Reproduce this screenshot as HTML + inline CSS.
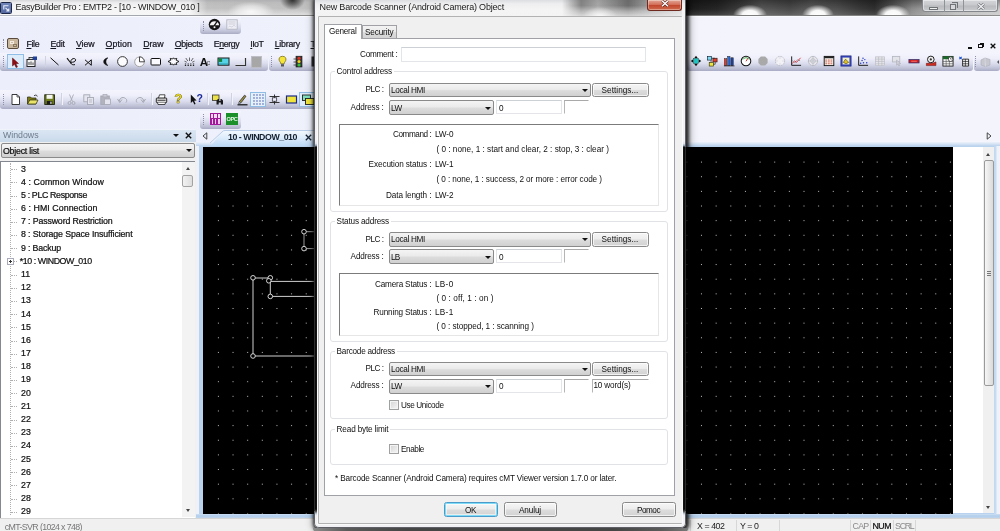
<!DOCTYPE html>
<html><head><meta charset="utf-8"><title>EasyBuilder Pro : EMTP2 - [10 - WINDOW_010 ]</title>
<style>
html,body{margin:0;padding:0;}
body{width:1000px;height:531px;overflow:hidden;background:#f3f4fc;font-family:"Liberation Sans",sans-serif;}
#root{position:relative;width:1000px;height:531px;overflow:hidden;will-change:transform;background:linear-gradient(90deg,#eceefb 0,#eff1fb 35%,#f4f5fc 75%,#f4f5fc 100%);}
.t{position:absolute;white-space:pre;line-height:12px;height:12px;}
.t u{text-decoration:underline;text-underline-offset:1px;}
svg{position:absolute;overflow:visible;}
.combo{position:absolute;box-sizing:border-box;border:1px solid #8a8a8a;border-radius:2px;background:linear-gradient(#f4f4f4,#ebebeb 45%,#dcdcdc 55%,#d0d0d0);}
.combo:after{content:"";position:absolute;right:1.800px;top:50%;margin-top:-1.200px;border:3.300px solid transparent;border-top:3.800px solid #111;border-bottom:0;}
.btn{position:absolute;box-sizing:border-box;border:1px solid #8a8a8a;border-radius:2.5px;background:linear-gradient(#f6f6f6,#ececec 48%,#dddddd 52%,#d2d2d2);box-shadow:inset 0 0 0 1px rgba(255,255,255,.7);}
.edit{position:absolute;box-sizing:border-box;border:1px solid #e3e5e8;border-top-color:#cdd0d5;background:#fff;}
.grp{position:absolute;box-sizing:border-box;border:1px solid #e0e2e5;border-radius:3px;}
.sunk{position:absolute;box-sizing:border-box;border:1px solid;border-color:#7b7b7b #e6e6e6 #e6e6e6 #7b7b7b;background:#fff;}
.chk{position:absolute;box-sizing:border-box;border:1px solid #9fa0a0;background:linear-gradient(135deg,#d4d4d4,#f6f6f6);box-shadow:inset 0 0 0 1px #f4f4f4;}
.tb{position:absolute;box-sizing:border-box;border-radius:0 0 3px 3px;background:linear-gradient(#f3f4fc 0,#eeeffa 30%,#dadced 60%,#bec0d6 85%,#a9abc4 100%);}
.grip{position:absolute;width:1px;border-left:1px dotted #8d90a8;}

</style></head>
<body>
<div id="root">
<div style="position:absolute;left:0.00px;top:0.00px;width:1000.00px;height:15.00px;background:linear-gradient(#d6d7da 0,#ededef 18%,#f5f5f6 45%,#f6f6f7 100%);"></div>
<div style="position:absolute;left:190.00px;top:0.00px;width:124.00px;height:15.00px;background:linear-gradient(90deg,rgba(120,120,120,0) 0,rgba(120,120,120,.42) 14%,rgba(130,130,130,.46) 100%);-webkit-mask-image:linear-gradient(#000 0,#000 55%,rgba(0,0,0,.45) 100%);"></div>
<div style="position:absolute;left:228.00px;top:2.00px;width:46.00px;height:13.00px;background:radial-gradient(ellipse at 50% 75%,rgba(255,255,255,.85) 0,rgba(255,255,255,.5) 40%,rgba(255,255,255,0) 72%);"></div>
<div style="position:absolute;left:280.00px;top:0.00px;width:25.00px;height:9.50px;background:radial-gradient(ellipse 50% 100% at 50% 0,rgba(25,25,25,.85) 0,rgba(40,40,40,.55) 45%,rgba(90,90,90,0) 100%);"></div>
<div style="position:absolute;left:686.00px;top:0.00px;width:314.00px;height:15.00px;background:linear-gradient(90deg,#1c1c1c 0,#262626 10%,#3c3c3c 17%,#585858 24%,#4a4a4a 33%,#5c5c5c 40%,#505050 48%,#383838 56%,#303030 60%,#5a5a5a 66%,#8c8c8c 72%,#a4a4a4 78%,#bdbdbd 86%,#cacaca 100%);"></div>
<div style="position:absolute;left:686.00px;top:0.00px;width:314.00px;height:15.00px;background:linear-gradient(rgba(0,0,0,.35),rgba(0,0,0,0) 60%,rgba(255,255,255,.12));"></div>
<div style="position:absolute;left:733.00px;top:2.50px;width:34.00px;height:12.50px;background:radial-gradient(ellipse 50% 85% at 50% 100%,#fff 0,rgba(255,255,255,.95) 45%,rgba(255,255,255,.5) 70%,rgba(255,255,255,0) 100%);"></div>
<div style="position:absolute;left:802.00px;top:2.50px;width:32.00px;height:12.50px;background:radial-gradient(ellipse 50% 85% at 50% 100%,#fff 0,rgba(255,255,255,.95) 45%,rgba(255,255,255,.5) 70%,rgba(255,255,255,0) 100%);"></div>
<div style="position:absolute;left:876.00px;top:2.50px;width:34.00px;height:12.50px;background:radial-gradient(ellipse 50% 85% at 50% 100%,#fff 0,rgba(255,255,255,.95) 45%,rgba(255,255,255,.5) 70%,rgba(255,255,255,0) 100%);"></div>
<div style="position:absolute;left:0.00px;top:14.50px;width:1000.00px;height:1.00px;background:linear-gradient(90deg,#b9bcc4 0,#9a9ca2 20%,#8a8a8a 30%,#777 70%,#8e8e8e 100%)"></div>
<div style="position:absolute;left:0.00px;top:15.50px;width:1000.00px;height:1.00px;background:#fafbfe"></div>
<div style="position:absolute;left:0.30px;top:2.20px;width:11.70px;height:11.40px;background:linear-gradient(#6f84b8,#54699f);border:1.200px solid #1c2748;box-sizing:border-box;border-radius:1.500px;"><svg style="left:1.500px;top:1.500px" width="7" height="7" viewBox="0 0 7 7"><path d="M.8 4.500V.8H5.500M2.500 2.800 L5.800 6 M5.800 3.500V6H3.300" fill="none" stroke="#e8eefa" stroke-width="1.100"/></svg></div>
<span class="t" style="left:15.40px;top:1.00px;font-size:9px;font-weight:400;color:#1a1a1a;letter-spacing:-0.251px;">EasyBuilder Pro : EMTP2 - [10 - WINDOW_010 ]</span>
<div style="position:absolute;left:922.40px;top:0.00px;width:75.20px;height:12.20px;border:1px solid #84878c;border-top:0;border-radius:0 0 3.500px 3.500px;box-sizing:border-box;background:linear-gradient(#d3d5d8,#c6c8cb 48%,#b8babd 52%,#c9cbce);box-shadow:inset 0 0 0 1px rgba(255,255,255,.45)"></div>
<div style="position:absolute;left:943.50px;top:0.00px;width:1.00px;height:11.50px;background:#8f9297;"></div>
<div style="position:absolute;left:963.00px;top:0.00px;width:1.00px;height:11.50px;background:#8f9297;"></div>
<div style="position:absolute;left:929.00px;top:6.50px;width:8.50px;height:3.00px;border:1px solid #6f7277;background:#eee;box-sizing:border-box;border-radius:.5px"></div>
<div style="position:absolute;left:949.50px;top:3.50px;width:6.00px;height:6.00px;border:1px solid #6f7277;box-sizing:border-box;background:rgba(240,240,240,.5)"></div>
<div style="position:absolute;left:951.50px;top:1.80px;width:6.00px;height:6.00px;border:1px solid #6f7277;box-sizing:border-box;border-left:0;border-bottom:0"></div>
<svg style="left:976.500px;top:2.500px" width="8" height="7" viewBox="0 0 8 7"><path d="M1 .8 L7 6.200M7 .8 L1 6.200" stroke="#70737a" stroke-width="2.600"/><path d="M1 .8 L7 6.200M7 .8 L1 6.200" stroke="#f2f2f2" stroke-width="1.300"/></svg>
<div class="tb" style="position:absolute;left:200.10px;top:17.00px;width:41.40px;height:17.40px;"></div>
<div class="grip" style="position:absolute;left:203.00px;top:20.50px;width:1.00px;height:10.00px;"></div>
<svg style="left:208.300px;top:18.300px" width="13" height="13" viewBox="0 0 13 13"><circle cx="6.5" cy="6.5" r="5.800" fill="#161616"/><path d="M1.800 7.200 A4.800 4.800 0 0 1 11.200 7.200 Z" fill="#f4f4f4"/><path d="M6 7.800 L9.200 3.400" stroke="#111" stroke-width="1.300"/><circle cx="6.500" cy="9.300" r="1" fill="#eee"/></svg>
<svg style="left:226.300px;top:19.300px" width="12" height="11" viewBox="0 0 12 11"><rect x=".8" y=".8" width="10.400" height="9.400" fill="#eeeff6" stroke="#b4b6c2" stroke-width=".9"/><path d="M2.500 3h7M2.500 5h7" stroke="#c0c2cd" stroke-width=".7"/><path d="M2.500 8 C4 6 5 9 6.500 7.500 S8.500 6.500 9.500 7.500" fill="none" stroke="#c0c2cd" stroke-width=".7"/></svg>
<div class="grip" style="position:absolute;left:2.50px;top:39.00px;width:1.00px;height:10.00px;"></div>
<div style="position:absolute;left:7.20px;top:38.20px;width:12.00px;height:11.20px;box-sizing:border-box;border:1px solid #5b4b3c;border-radius:2px;background:#c9b89f;"><div style="position:absolute;left:2px;top:2px;width:4px;height:3px;border:1px solid #f4ece0;box-sizing:border-box"></div><div style="position:absolute;left:4.5px;top:4.5px;width:4px;height:3px;border:1px solid #8a7760;box-sizing:border-box"></div></div>
<span class="t" style="left:26.40px;top:37.60px;font-size:8.8px;font-weight:400;color:#15151f;letter-spacing:-0.347px;-webkit-text-stroke:.22px #15151f;"><u>F</u>ile</span>
<span class="t" style="left:50.40px;top:37.60px;font-size:8.8px;font-weight:400;color:#15151f;letter-spacing:-0.193px;-webkit-text-stroke:.22px #15151f;"><u>E</u>dit</span>
<span class="t" style="left:76.00px;top:37.60px;font-size:8.8px;font-weight:400;color:#15151f;letter-spacing:-0.130px;-webkit-text-stroke:.22px #15151f;"><u>V</u>iew</span>
<span class="t" style="left:105.60px;top:37.60px;font-size:8.8px;font-weight:400;color:#15151f;letter-spacing:0.080px;-webkit-text-stroke:.22px #15151f;"><u>O</u>ption</span>
<span class="t" style="left:143.20px;top:37.60px;font-size:8.8px;font-weight:400;color:#15151f;letter-spacing:-0.058px;-webkit-text-stroke:.22px #15151f;"><u>D</u>raw</span>
<span class="t" style="left:174.70px;top:37.60px;font-size:8.8px;font-weight:400;color:#15151f;letter-spacing:-0.290px;-webkit-text-stroke:.22px #15151f;"><u>O</u>bjects</span>
<span class="t" style="left:213.80px;top:37.60px;font-size:8.8px;font-weight:400;color:#15151f;letter-spacing:-0.396px;-webkit-text-stroke:.22px #15151f;">E<u>n</u>ergy</span>
<span class="t" style="left:250.30px;top:37.60px;font-size:8.8px;font-weight:400;color:#15151f;letter-spacing:-0.539px;-webkit-text-stroke:.22px #15151f;"><u>I</u>IoT</span>
<span class="t" style="left:274.70px;top:37.60px;font-size:8.8px;font-weight:400;color:#15151f;letter-spacing:-0.242px;-webkit-text-stroke:.22px #15151f;"><u>L</u>ibrary</span>
<span class="t" style="left:310.50px;top:37.60px;font-size:8.8px;font-weight:400;color:#15151f;"><u>T</u></span>
<div class="tb" style="position:absolute;left:0.00px;top:52.60px;width:267.50px;height:18.90px;"></div>
<div class="tb" style="position:absolute;left:268.50px;top:52.60px;width:52.00px;height:18.90px;"></div>
<div class="grip" style="position:absolute;left:2.50px;top:56.00px;width:1.00px;height:11.00px;"></div>
<div class="grip" style="position:absolute;left:270.50px;top:56.00px;width:1.00px;height:11.00px;"></div>
<div style="position:absolute;left:7.20px;top:54.20px;width:16.80px;height:15.20px;box-sizing:border-box;border:1px solid #8fbde6;background:#dcecfb;"></div>
<svg style="left:8.8px;top:56.2px" width="13" height="13" viewBox="0 0 13 13"><path d="M3.5 2 L3.5 10 L5.500 8.300 L7.100 11.600 L8.500 10.900 L6.900 7.700 L9.500 7.500 Z" fill="#8e0c12" stroke="#5d0a0e" stroke-width=".5"/></svg>
<svg style="left:24.5px;top:55.3px" width="13" height="13" viewBox="0 0 13 13"><rect x="2" y="4.5" width="8" height="7" fill="#f4f4f4" stroke="#222" stroke-width="1"/><rect x="4" y="2.5" width="4" height="2" fill="#ddd" stroke="#222" stroke-width=".8"/><rect x="8" y="1.5" width="4" height="3.5" fill="#1d3f9e"/><path d="M4 7v3M6 6.5v3.5M8 7.5v2.500" stroke="#333" stroke-width=".9"/></svg>
<div style="position:absolute;left:44.50px;top:56.00px;width:1.00px;height:11.00px;background:#d0d2e1;"></div>
<svg style="left:48.0px;top:55.3px" width="13" height="13" viewBox="0 0 13 13"><path d="M2.5 2.800 L10.500 10" stroke="#111" stroke-width="1"/></svg>
<svg style="left:65.0px;top:55.3px" width="13" height="13" viewBox="0 0 13 13"><path d="M2 3.200 L6.200 8.500" fill="none" stroke="#111" stroke-width="1.100"/><path d="M6 7.200 C8 7.500 10.800 6.800 10.600 4.800 C10.400 3 7 3 6 5.500 C5 8 6.500 10.500 10 9.600" fill="none" stroke="#111" stroke-width="1"/></svg>
<svg style="left:82.3px;top:55.6px" width="13" height="13" viewBox="0 0 13 13"><path d="M3 3.800 L9.300 9.300 L9.300 3.800 L3 9.300" fill="none" stroke="#111" stroke-width="1"/></svg>
<svg style="left:99.1px;top:55.3px" width="13" height="13" viewBox="0 0 13 13"><path d="M9 2.800 C3.200 3.600 3.200 9.800 9 10.600 C6.300 8.800 6.300 4.600 9 2.800Z" fill="#111" stroke="#111" stroke-width=".5"/></svg>
<svg style="left:115.9px;top:55.1px" width="13" height="13" viewBox="0 0 13 13"><circle cx="6.5" cy="6.5" r="4.900" fill="#fcfcff" stroke="#222" stroke-width=".9"/></svg>
<svg style="left:132.5px;top:55.3px" width="13" height="13" viewBox="0 0 13 13"><circle cx="6.5" cy="6.8" r="4.800" fill="#fbfbff" stroke="#9a9a9a" stroke-width=".9"/><path d="M6.5 6.8 L6.5 1.8 A5 5 0 0 1 11.400 6.800Z" fill="#fff" stroke="#333" stroke-width=".9"/></svg>
<svg style="left:149.3px;top:55.3px" width="13" height="13" viewBox="0 0 13 13"><rect x="2" y="3.500" width="9.500" height="6.500" rx=".8" fill="#fbfbff" stroke="#111" stroke-width="1"/></svg>
<svg style="left:166.7px;top:55.3px" width="13" height="13" viewBox="0 0 13 13"><path d="M1 6.500 L3.800 5.200 L3.200 3.400 L5.600 4 L6.500 2.800 L7.400 4 L9.800 3.400 L9.200 5.200 L12 6.500 L9.200 7.800 L9.800 9.600 L7.400 9 L6.500 10.200 L5.600 9 L3.200 9.600 L3.800 7.800Z" fill="#fbfbff" stroke="#111" stroke-width=".9"/></svg>
<svg style="left:182.5px;top:55.3px" width="13" height="13" viewBox="0 0 13 13"><path d="M2.5 8.500v3M5.200 8.500v3M7.800 8.500v3M10.500 8.500v3" stroke="#222" stroke-width="1.300" stroke-dasharray="1 .6"/><path d="M6.500 6 L6.500 2.500M4.800 6 L2.800 3M8.200 6 L10.200 3M3.800 7.200 L1.500 6.200M9.200 7.200 L11.500 6.200" stroke="#444" stroke-width=".8"/></svg>
<span class="t" style="left:199.80px;top:55.68px;font-size:11.5px;font-weight:700;color:#111;">A</span>
<span class="t" style="left:206.60px;top:56.86px;font-size:7.5px;font-weight:400;color:#555;">c</span>
<svg style="left:216.7px;top:55.3px" width="13" height="13" viewBox="0 0 13 13"><rect x="1" y="3" width="11" height="7.200" fill="#56d3e4" stroke="#1a1a1a" stroke-width="1"/><rect x="1.500" y="3.500" width="3.600" height="3.400" fill="#15803a"/><path d="M2 8.800h9" stroke="#2aa0b4" stroke-width=".8"/></svg>
<svg style="left:233.5px;top:55.3px" width="13" height="13" viewBox="0 0 13 13"><path d="M1.500 10.500 L11.500 10.500 L11.500 3" fill="none" stroke="#333" stroke-width="1.200"/><path d="M2 9.500 L10.500 9.500 L10.500 3.500" fill="none" stroke="#dcdce6" stroke-width="1"/></svg>
<div style="position:absolute;left:250.60px;top:56.00px;width:11.00px;height:11.50px;background:#a7a7a7;border:1px solid #bdbdc6;box-sizing:border-box"></div>
<svg style="left:275.5px;top:55.3px" width="13" height="13" viewBox="0 0 13 13"><path d="M6.500 1.300 C3.600 1.300 2.600 3.500 3.200 5.300 C3.700 6.700 4.800 7.300 4.800 8.800 L8.200 8.800 C8.200 7.300 9.300 6.700 9.800 5.300 C10.400 3.500 9.400 1.300 6.500 1.300Z" fill="#f4e43a" stroke="#6a5f10" stroke-width=".7"/><rect x="5" y="9.200" width="3" height="2.300" fill="#555"/></svg>
<svg style="left:292.1px;top:55.3px" width="13" height="13" viewBox="0 0 13 13"><rect x="4" y="1.200" width="6" height="10.800" fill="#3b3b3b" stroke="#111" stroke-width=".6"/><circle cx="7" cy="3.300" r="1.500" fill="#e5301e"/><circle cx="7" cy="6.600" r="1.500" fill="#f0d41c"/><circle cx="7" cy="9.900" r="1.500" fill="#2fc437"/><path d="M1.500 4h2.500M1.500 7h2.500M1.500 10h2.500" stroke="#333" stroke-width=".8"/></svg>
<svg style="left:307.5px;top:55.3px" width="13" height="13" viewBox="0 0 13 13"><rect x="3.500" y="1.500" width="3" height="10" fill="#333"/></svg>
<div class="tb" style="position:absolute;left:0.00px;top:90.00px;width:321.00px;height:19.40px;"></div>
<div class="grip" style="position:absolute;left:2.50px;top:94.00px;width:1.00px;height:11.00px;"></div>
<svg style="left:8.5px;top:92.8px" width="13" height="13" viewBox="0 0 13 13"><path d="M3 1.500 L8 1.500 L10.500 4 L10.500 11.500 L3 11.500Z" fill="#fff" stroke="#222" stroke-width=".9"/><path d="M8 1.500V4H10.500" fill="none" stroke="#222" stroke-width=".7"/></svg>
<svg style="left:25.5px;top:92.8px" width="13" height="13" viewBox="0 0 13 13"><path d="M1.500 11 L1.500 4 L4.500 4 L5.500 5 L10 5 L10 11Z" fill="#7c7a18" stroke="#2a2a08" stroke-width=".7"/><path d="M1.500 11 L3.800 7 L12 7 L10 11Z" fill="#e9e36a" stroke="#2a2a08" stroke-width=".7"/><path d="M8 2.800 C9.500 1.500 11 2 11.300 3.500" fill="none" stroke="#222" stroke-width=".8"/></svg>
<svg style="left:43.0px;top:92.8px" width="13" height="13" viewBox="0 0 13 13"><rect x="1.800" y="1.800" width="9.600" height="9.600" fill="#6f7d1a" stroke="#161a05" stroke-width=".9"/><rect x="3.600" y="1.800" width="6" height="4" fill="#f4f4f4"/><rect x="3.800" y="8" width="5.500" height="3.400" fill="#1b1b1b"/><rect x="7.300" y="8.600" width="1.300" height="2.300" fill="#ddd"/></svg>
<div style="position:absolute;left:60.50px;top:93.00px;width:1.00px;height:12.00px;background:#cfd1e0;border-right:1px solid #f3f4fb"></div>
<svg style="left:64.5px;top:92.8px" width="13" height="13" viewBox="0 0 13 13"><path d="M4.500 1.500 L7.500 8.500M8.500 1.500 L5.500 8.500" stroke="#a6a8b4" stroke-width=".9"/><circle cx="4.500" cy="10" r="1.500" fill="none" stroke="#a6a8b4" stroke-width=".9"/><circle cx="8.500" cy="10" r="1.500" fill="none" stroke="#a6a8b4" stroke-width=".9"/></svg>
<svg style="left:81.9px;top:92.8px" width="13" height="13" viewBox="0 0 13 13"><rect x="1.800" y="1.800" width="6" height="7" fill="#e4e5ee" stroke="#a6a8b4" stroke-width=".9"/><rect x="5.500" y="4.500" width="6" height="7" fill="#e4e5ee" stroke="#a6a8b4" stroke-width=".9"/><path d="M7 7h3M7 9h3" stroke="#a6a8b4" stroke-width=".7"/></svg>
<svg style="left:99.1px;top:92.8px" width="13" height="13" viewBox="0 0 13 13"><rect x="1.800" y="3" width="8.500" height="8.500" fill="#b2b3be" stroke="#a6a8b4" stroke-width=".9"/><rect x="4" y="1.500" width="4" height="2.500" fill="#c9cad3" stroke="#a6a8b4" stroke-width=".7"/><rect x="5.500" y="6" width="6" height="5.500" fill="#e4e5ee" stroke="#a6a8b4" stroke-width=".8"/></svg>
<svg style="left:116.3px;top:92.8px" width="13" height="13" viewBox="0 0 13 13"><path d="M3.500 8.500 C3 4.500 8 3 10.500 6.500 C11 8 10.500 9 10 9.500" fill="none" stroke="#a6a8b4" stroke-width="1"/><path d="M1.500 6 L3.700 9.500 L6 6.500" fill="none" stroke="#a6a8b4" stroke-width="1"/><path d="M2 11.500h9" stroke="#c6c8d4" stroke-width=".8"/></svg>
<svg style="left:133.5px;top:92.8px" width="13" height="13" viewBox="0 0 13 13"><path d="M9.500 8.500 C10 4.500 5 3 2.500 6.500 C2 8 2.500 9 3 9.500" fill="none" stroke="#a6a8b4" stroke-width="1"/><path d="M11.500 6 L9.300 9.500 L7 6.500" fill="none" stroke="#a6a8b4" stroke-width="1"/><path d="M2 11.500h9" stroke="#c6c8d4" stroke-width=".8"/></svg>
<div style="position:absolute;left:150.50px;top:93.00px;width:1.00px;height:12.00px;background:#cfd1e0;border-right:1px solid #f3f4fb"></div>
<svg style="left:155.2px;top:92.8px" width="13" height="13" viewBox="0 0 13 13"><path d="M3.500 5 L4.500 1.800 L10 1.800 L9.500 5" fill="#fff" stroke="#222" stroke-width=".8"/><rect x="1.300" y="5" width="10.400" height="4.600" rx=".8" fill="#d7d7d7" stroke="#111" stroke-width=".9"/><path d="M2.500 9.600 L3 11.500 L10 11.500 L10.500 9.600" fill="#fafafa" stroke="#222" stroke-width=".8"/><path d="M2.500 7.300h8" stroke="#333" stroke-width=".9"/></svg>
<span class="t" style="left:174.40px;top:92.74px;font-size:12.5px;font-weight:700;color:#e2d21e;-webkit-text-stroke:.7px #4a4208;paint-order:stroke fill;">?</span>
<svg style="left:188.9px;top:92.8px" width="13" height="13" viewBox="0 0 13 13"><path d="M1.800 1.500 L1.800 10 L3.800 8.300 L5.300 11.600 L6.600 11 L5.100 7.800 L7.600 7.600Z" fill="#111"/></svg>
<span class="t" style="left:196.60px;top:92.13px;font-size:10.5px;font-weight:700;color:#1c2a9c;">?</span>
<div style="position:absolute;left:206.50px;top:93.00px;width:1.00px;height:12.00px;background:#cfd1e0;border-right:1px solid #f3f4fb"></div>
<svg style="left:211.3px;top:92.8px" width="13" height="13" viewBox="0 0 13 13"><rect x="1.500" y="2" width="6.500" height="5.500" fill="#ece247" stroke="#333" stroke-width=".8"/><path d="M5.500 11.500 L5.500 7.500 L7 6 L8 6 L8 8 L9.500 8 L9.500 6 L10.500 6 L12 7.500 L12 11.500 L9.800 11.500 L9.800 9.500 L7.700 9.500 L7.700 11.500Z" fill="#1b1b1b"/></svg>
<div style="position:absolute;left:230.50px;top:93.00px;width:1.00px;height:12.00px;background:#cfd1e0;border-right:1px solid #f3f4fb"></div>
<svg style="left:236.1px;top:92.8px" width="13" height="13" viewBox="0 0 13 13"><path d="M3 9 L8.500 2.200 L10 3.300 L5 9.800Z" fill="#9a8f3a" stroke="#222" stroke-width=".7"/><path d="M3 9 L2.600 10.600 L5 9.800" fill="#eee" stroke="#222" stroke-width=".6"/><path d="M1.500 11.800h10" stroke="#111" stroke-width="1.200"/></svg>
<div style="position:absolute;left:250.20px;top:91.50px;width:16.20px;height:15.60px;box-sizing:border-box;border:1px solid #8fbde6;background:#e6f1fc;"></div>
<svg style="left:251.8px;top:92.8px" width="13" height="13" viewBox="0 0 13 13"><g fill="#27379c"><circle cx="2" cy="2" r=".65"/><circle cx="5" cy="2" r=".65"/><circle cx="8" cy="2" r=".65"/><circle cx="11" cy="2" r=".65"/><circle cx="2" cy="5" r=".65"/><circle cx="5" cy="5" r=".65"/><circle cx="8" cy="5" r=".65"/><circle cx="11" cy="5" r=".65"/><circle cx="2" cy="8" r=".65"/><circle cx="5" cy="8" r=".65"/><circle cx="8" cy="8" r=".65"/><circle cx="11" cy="8" r=".65"/><circle cx="2" cy="11" r=".65"/><circle cx="5" cy="11" r=".65"/><circle cx="8" cy="11" r=".65"/><circle cx="11" cy="11" r=".65"/></g></svg>
<svg style="left:268.1px;top:92.8px" width="13" height="13" viewBox="0 0 13 13"><path d="M1.500 3.500h10M1.500 9.500h10M6.500 1.500v10" stroke="#222" stroke-width=".9"/><rect x="4.300" y="4.800" width="4.400" height="3.400" fill="#eef" stroke="#222" stroke-width=".7"/></svg>
<svg style="left:284.5px;top:92.8px" width="13" height="13" viewBox="0 0 13 13"><rect x="1.500" y="3" width="10" height="7" fill="#f1e53c" stroke="#1b2a8c" stroke-width="1.200"/></svg>
<div style="position:absolute;left:299.20px;top:91.50px;width:15.00px;height:15.60px;box-sizing:border-box;border:1px solid #8fbde6;border-right:0;background:#dcecfb;"></div>
<svg style="left:301.0px;top:92.8px" width="13" height="13" viewBox="0 0 13 13"><rect x="1.500" y="2" width="8" height="5.500" fill="#7fe0c0" stroke="#222" stroke-width=".9"/><rect x="4.500" y="5.500" width="8.500" height="6" fill="#f1e53c" stroke="#222" stroke-width=".9"/></svg>
<div class="tb" style="position:absolute;left:200.30px;top:111.00px;width:41.00px;height:17.50px;"></div>
<div class="grip" style="position:absolute;left:202.50px;top:113.50px;width:1.00px;height:11.00px;"></div>
<div style="position:absolute;left:209.60px;top:113.00px;width:11.80px;height:11.60px;background:#a3199c;"><div style="position:absolute;left:1.500px;top:1px;width:8.800px;height:4px;background:#f4d9f2"></div><div style="position:absolute;left:3.400px;top:1px;width:1.200px;height:10px;background:#a3199c"></div><div style="position:absolute;left:7.200px;top:1px;width:1.200px;height:10px;background:#a3199c"></div><div style="position:absolute;left:2px;top:6px;width:1.300px;height:5px;background:#f1c9ef"></div><div style="position:absolute;left:5.300px;top:6px;width:1.300px;height:5px;background:#f1c9ef"></div><div style="position:absolute;left:8.800px;top:6px;width:1.300px;height:5px;background:#f1c9ef"></div></div>
<div style="position:absolute;left:226.00px;top:113.00px;width:12.00px;height:11.60px;background:#1b8f2a;"></div>
<span class="t" style="left:226.60px;top:112.65px;font-size:5.6px;font-weight:700;color:#e9f7e9;letter-spacing:-0.442px;">OPC</span>
<div class="tb" style="position:absolute;left:687.00px;top:52.60px;width:285.50px;height:18.90px;"></div>
<div class="tb" style="position:absolute;left:973.50px;top:52.60px;width:26.50px;height:18.90px;"></div>
<div class="grip" style="position:absolute;left:974.50px;top:56.00px;width:1.00px;height:11.00px;"></div>
<svg style="left:690.0px;top:55.2px" width="12" height="12" viewBox="0 0 13 13"><path d="M6.500 .8 L8.500 3.500 L4.500 3.500ZM6.500 12.200 L8.500 9.500 L4.500 9.500ZM.8 6.500 L3.500 4.500 L3.500 8.500ZM12.200 6.500 L9.500 4.500 L9.500 8.500Z" fill="#111"/><rect x="4" y="4" width="5" height="5" fill="#23c7c4" stroke="#0a5c5a" stroke-width=".6"/></svg>
<svg style="left:706.0px;top:55.2px" width="12" height="12" viewBox="0 0 13 13"><rect x="1.500" y="1.500" width="4.500" height="4" fill="#7fd8f0" stroke="#123" stroke-width=".7"/><rect x="7.500" y="3.500" width="4.500" height="4" fill="#e33c2c" stroke="#311" stroke-width=".7"/><rect x="3.500" y="8" width="4.500" height="4" fill="#f1e53c" stroke="#331" stroke-width=".7"/><path d="M6 3.500h3.500M5.500 8V5.500M8 10h2V7.500" fill="none" stroke="#222" stroke-width=".7"/></svg>
<svg style="left:722.6px;top:55.2px" width="12" height="12" viewBox="0 0 13 13"><rect x="1.500" y="4" width="2.600" height="7.500" fill="#e33c2c" stroke="#222" stroke-width=".5"/><rect x="5" y="1.500" width="2.600" height="10" fill="#2b6fdc" stroke="#222" stroke-width=".5"/><rect x="8.500" y="3" width="2.600" height="8.500" fill="#1d3f9e" stroke="#222" stroke-width=".5"/><path d="M1 11.800h11.500" stroke="#111" stroke-width=".8"/></svg>
<svg style="left:739.6px;top:55.2px" width="12" height="12" viewBox="0 0 13 13"><circle cx="6.500" cy="6.500" r="5.200" fill="#fff" stroke="#111" stroke-width="1.100"/><path d="M6.500 6.800 L8.800 3.200" stroke="#d22" stroke-width="1"/><path d="M3 5 A4 4 0 0 1 10 5" fill="none" stroke="#2a9a3a" stroke-width=".9"/></svg>
<svg style="left:756.6px;top:55.2px" width="12" height="12" viewBox="0 0 13 13"><path d="M4.200 1.500 L8.800 1.500 L11.500 4.200 L11.500 8.800 L8.800 11.500 L4.200 11.500 L1.500 8.800 L1.500 4.200Z" fill="#a9a9a9"/></svg>
<svg style="left:773.8px;top:55.2px" width="12" height="12" viewBox="0 0 13 13"><circle cx="6.500" cy="6.500" r="5" fill="#f1f1f6" stroke="#b4b5c0" stroke-width="1" stroke-dasharray="1.600 1"/><path d="M6.500 2.500v1.500M6.500 9v1.500M2.500 6.500h1.500M9 6.500h1.500" stroke="#c6c7d0" stroke-width=".7"/></svg>
<svg style="left:790.0px;top:55.2px" width="12" height="12" viewBox="0 0 13 13"><path d="M1.800 1.500V11.200H12" fill="none" stroke="#111" stroke-width="1"/><path d="M2.500 9 L5 6.500 L7 8 L11.500 3" fill="none" stroke="#d22" stroke-width=".9"/><path d="M2.500 6 L5 8.500 L8 5 L11.500 6.500" fill="none" stroke="#555" stroke-width=".7" stroke-dasharray="1 .7"/></svg>
<svg style="left:806.8px;top:55.2px" width="12" height="12" viewBox="0 0 13 13"><circle cx="6.500" cy="6.500" r="5" fill="#e9e9ee" stroke="#b5b6c0" stroke-width=".9"/><circle cx="6.500" cy="6.500" r="2.500" fill="none" stroke="#b5b6c0" stroke-width=".8"/><path d="M6.500 1v11M1 6.500h11" stroke="#b5b6c0" stroke-width=".7"/></svg>
<svg style="left:823.4px;top:55.2px" width="12" height="12" viewBox="0 0 13 13"><rect x="1.300" y="1.500" width="10.400" height="10" fill="#fbf7f2" stroke="#111" stroke-width="1"/><rect x="1.300" y="1.500" width="10.400" height="2" fill="#222"/><path d="M2.500 5.500h8M2.500 7.500h8M2.500 9.500h8" stroke="#c2402c" stroke-width=".9" stroke-dasharray="2 .8"/></svg>
<svg style="left:840.4px;top:55.2px" width="12" height="12" viewBox="0 0 13 13"><rect x="1" y="1" width="11" height="11" fill="#3b49c4" stroke="#1a237e" stroke-width=".8"/><rect x="2.800" y="2.800" width="7.400" height="7.400" fill="#f3f0c4"/><path d="M3.500 8 L6 4.500 L9.500 8 L6.500 9.500Z" fill="#e0c020" stroke="#333" stroke-width=".6"/></svg>
<svg style="left:857.0px;top:55.2px" width="12" height="12" viewBox="0 0 13 13"><path d="M1.800 1.500V11.200H12" fill="none" stroke="#111" stroke-width="1"/><g fill="#2b3fc4"><circle cx="4" cy="9" r=".8"/><circle cx="5.500" cy="6" r=".8"/><circle cx="7" cy="8.500" r=".8"/><circle cx="8.500" cy="5" r=".8"/><circle cx="10.500" cy="8.500" r=".8"/><circle cx="6.500" cy="3.500" r=".8"/></g></svg>
<svg style="left:874.0px;top:55.2px" width="12" height="12" viewBox="0 0 13 13"><rect x="1.500" y="2" width="10" height="9.500" fill="#e6e6ea" stroke="#c0c1c9" stroke-width=".8"/><path d="M1.500 4.500h10M1.500 7h10M1.500 9.500h10M5 2v9.500M8.500 2v9.500" stroke="#b9bac3" stroke-width=".7"/></svg>
<svg style="left:891.0px;top:55.2px" width="12" height="12" viewBox="0 0 13 13"><rect x="1.500" y="1.500" width="8" height="6" fill="#e3e4ea" stroke="#b5b6c0" stroke-width=".9"/><path d="M6 5.500 L6 11 L7.500 9.800 L8.500 12 L9.500 11.500 L8.500 9.400 L10.500 9.200Z" fill="#d0d1d8" stroke="#a9aab4" stroke-width=".6"/></svg>
<svg style="left:908.0px;top:55.2px" width="12" height="12" viewBox="0 0 13 13"><rect x="1" y="5" width="11" height="3.600" fill="#d21d1d" stroke="#2a2a6a" stroke-width=".8"/><path d="M3.500 6.800h6" stroke="#ff9a9a" stroke-width=".7"/></svg>
<svg style="left:925.0px;top:55.2px" width="12" height="12" viewBox="0 0 13 13"><circle cx="6.300" cy="4.800" r="3.600" fill="#f0f0f0" stroke="#111" stroke-width="1"/><circle cx="6.300" cy="4.800" r="1.200" fill="#333"/><path d="M1.500 9 L8 9 L11.800 7.500 L11.800 11.500 L1.500 11.500Z" fill="#d22a1c" stroke="#611" stroke-width=".6"/></svg>
<svg style="left:942.0px;top:55.2px" width="12" height="12" viewBox="0 0 13 13"><rect x="1" y="1.500" width="11" height="10.500" fill="#f4f4f4" stroke="#111" stroke-width=".9"/><rect x="1" y="1.500" width="11" height="3" fill="#1a6a2a"/><path d="M1 7h11M1 9.500h11M4.500 4.500v7.500M8 4.500v7.500" stroke="#444" stroke-width=".6"/><circle cx="9.300" cy="4.500" r="2.500" fill="#fff" stroke="#111" stroke-width=".7"/><path d="M9.300 3v1.500h1.200" stroke="#111" stroke-width=".6" fill="none"/></svg>
<svg style="left:958.0px;top:55.2px" width="12" height="12" viewBox="0 0 13 13"><path d="M1.500 2 L4 4.500M4 2 L1.500 4.500" stroke="#1f55d0" stroke-width="1.200"/><path d="M5 4.500h6.500V12H5Z" fill="#f4f4f4" stroke="#111" stroke-width=".9"/><path d="M5 7h6.500M5 9.500h6.500M8 4.500V12" stroke="#111" stroke-width=".7"/></svg>
<svg style="left:979.1px;top:54.5px" width="13" height="13" viewBox="0 0 13 13"><path d="M2 5 L6 3 L11 4.500 L11 10 L6.500 11.500 L2 10Z" fill="#c6c7cf" stroke="#b1b2bc" stroke-width=".7"/><path d="M6 3 L6.500 11.500" stroke="#dadbe2" stroke-width=".8"/></svg>
<div style="position:absolute;left:996.80px;top:59.50px;width:0.00px;height:0.00px;border-right:2.500px solid #555;border-top:2px solid transparent;border-bottom:2px solid transparent;width:0;height:0;background:none"></div>
<div style="position:absolute;left:967.50px;top:47.30px;width:4.20px;height:1.50px;background:#111"></div>
<div style="position:absolute;left:978.00px;top:44.30px;width:4.60px;height:4.20px;border:1px solid #111;border-top-width:1.400px;box-sizing:border-box"></div>
<div style="position:absolute;left:979.80px;top:42.80px;width:4.40px;height:4.00px;border:1px solid #111;border-top-width:1.400px;border-left:0;border-bottom:0;box-sizing:border-box"></div>
<svg style="left:990px;top:43.200px" width="6" height="6" viewBox="0 0 7 7"><path d="M.8 .8 L6.200 6.200M6.200 .8 L.8 6.200" stroke="#111" stroke-width="1.500"/></svg>
<div style="position:absolute;left:0.00px;top:129.00px;width:196.00px;height:13.30px;background:linear-gradient(#dbe6f3,#c9d9ea);border-top:1px solid #f0f4fa;box-sizing:border-box"></div>
<span class="t" style="left:3.00px;top:129.20px;font-size:8.8px;font-weight:400;color:#6d7c8d;letter-spacing:-0.027px;">Windows</span>
<div style="position:absolute;left:172.70px;top:133.80px;width:0.00px;height:0.00px;border:3.400px solid transparent;border-top:3.800px solid #111;border-bottom:0"></div>
<svg style="left:184.500px;top:131.500px" width="7" height="7" viewBox="0 0 7 7"><path d="M.8 .8 L6.200 6.200M6.200 .8 L.8 6.200" stroke="#111" stroke-width="1.400"/></svg>
<div style="position:absolute;left:0.00px;top:142.30px;width:196.00px;height:389.00px;background:#f0f0f0"></div>
<div class="combo" style="position:absolute;left:1.00px;top:142.60px;width:194.00px;height:15.80px;"></div>
<span class="t" style="left:3.00px;top:145.10px;font-size:8.8px;font-weight:400;color:#111;letter-spacing:-0.239px;-webkit-text-stroke:.22px #111;">Object list</span>
<div style="position:absolute;left:0.00px;top:160.50px;width:195.00px;height:357.00px;background:#fff;border:1px solid #828790;border-bottom:0;border-right:0;border-left-color:#85888f;box-sizing:border-box"></div>
<div style="position:absolute;left:9.50px;top:163.00px;width:1.00px;height:352.00px;border-left:1px dotted #b0b0b0;width:0"></div>
<div style="position:absolute;left:10.50px;top:169.20px;width:6.50px;height:0.00px;border-top:1px dotted #b0b0b0"></div>
<span class="t" style="left:21.00px;top:162.60px;font-size:8.8px;font-weight:400;color:#111;-webkit-text-stroke:.22px #111;">3</span>
<div style="position:absolute;left:10.50px;top:182.38px;width:6.50px;height:0.00px;border-top:1px dotted #b0b0b0"></div>
<span class="t" style="left:21.00px;top:175.78px;font-size:8.8px;font-weight:400;color:#111;letter-spacing:0.079px;-webkit-text-stroke:.22px #111;">4 : Common Window</span>
<div style="position:absolute;left:10.50px;top:195.55px;width:6.50px;height:0.00px;border-top:1px dotted #b0b0b0"></div>
<span class="t" style="left:21.00px;top:188.96px;font-size:8.8px;font-weight:400;color:#111;letter-spacing:-0.338px;-webkit-text-stroke:.22px #111;">5 : PLC Response</span>
<div style="position:absolute;left:10.50px;top:208.73px;width:6.50px;height:0.00px;border-top:1px dotted #b0b0b0"></div>
<span class="t" style="left:21.00px;top:202.14px;font-size:8.8px;font-weight:400;color:#111;letter-spacing:0.066px;-webkit-text-stroke:.22px #111;">6 : HMI Connection</span>
<div style="position:absolute;left:10.50px;top:221.91px;width:6.50px;height:0.00px;border-top:1px dotted #b0b0b0"></div>
<span class="t" style="left:21.00px;top:215.31px;font-size:8.8px;font-weight:400;color:#111;letter-spacing:-0.140px;-webkit-text-stroke:.22px #111;">7 : Password Restriction</span>
<div style="position:absolute;left:10.50px;top:235.08px;width:6.50px;height:0.00px;border-top:1px dotted #b0b0b0"></div>
<span class="t" style="left:21.00px;top:228.49px;font-size:8.8px;font-weight:400;color:#111;letter-spacing:-0.109px;-webkit-text-stroke:.22px #111;">8 : Storage Space Insufficient</span>
<div style="position:absolute;left:10.50px;top:248.26px;width:6.50px;height:0.00px;border-top:1px dotted #b0b0b0"></div>
<span class="t" style="left:21.00px;top:241.67px;font-size:8.8px;font-weight:400;color:#111;letter-spacing:-0.158px;-webkit-text-stroke:.22px #111;">9 : Backup</span>
<div style="position:absolute;left:7.00px;top:258.24px;width:6.60px;height:6.60px;border:1px solid #a9abb8;background:#fff;box-sizing:border-box"></div>
<div style="position:absolute;left:8.80px;top:261.04px;width:3.00px;height:1.00px;background:#333"></div>
<div style="position:absolute;left:9.80px;top:260.04px;width:1.00px;height:3.00px;background:#333"></div>
<div style="position:absolute;left:13.50px;top:261.44px;width:3.50px;height:0.00px;border-top:1px dotted #b0b0b0"></div>
<span class="t" style="left:19.80px;top:254.84px;font-size:8.8px;font-weight:400;color:#111;letter-spacing:-0.420px;-webkit-text-stroke:.22px #111;">*10 : WINDOW_010</span>
<div style="position:absolute;left:10.50px;top:274.62px;width:6.50px;height:0.00px;border-top:1px dotted #b0b0b0"></div>
<span class="t" style="left:21.00px;top:268.02px;font-size:8.8px;font-weight:400;color:#111;-webkit-text-stroke:.22px #111;">11</span>
<div style="position:absolute;left:10.50px;top:287.79px;width:6.50px;height:0.00px;border-top:1px dotted #b0b0b0"></div>
<span class="t" style="left:21.00px;top:281.20px;font-size:8.8px;font-weight:400;color:#111;-webkit-text-stroke:.22px #111;">12</span>
<div style="position:absolute;left:10.50px;top:300.97px;width:6.50px;height:0.00px;border-top:1px dotted #b0b0b0"></div>
<span class="t" style="left:21.00px;top:294.37px;font-size:8.8px;font-weight:400;color:#111;-webkit-text-stroke:.22px #111;">13</span>
<div style="position:absolute;left:10.50px;top:314.15px;width:6.50px;height:0.00px;border-top:1px dotted #b0b0b0"></div>
<span class="t" style="left:21.00px;top:307.55px;font-size:8.8px;font-weight:400;color:#111;-webkit-text-stroke:.22px #111;">14</span>
<div style="position:absolute;left:10.50px;top:327.32px;width:6.50px;height:0.00px;border-top:1px dotted #b0b0b0"></div>
<span class="t" style="left:21.00px;top:320.73px;font-size:8.8px;font-weight:400;color:#111;-webkit-text-stroke:.22px #111;">15</span>
<div style="position:absolute;left:10.50px;top:340.50px;width:6.50px;height:0.00px;border-top:1px dotted #b0b0b0"></div>
<span class="t" style="left:21.00px;top:333.90px;font-size:8.8px;font-weight:400;color:#111;-webkit-text-stroke:.22px #111;">16</span>
<div style="position:absolute;left:10.50px;top:353.68px;width:6.50px;height:0.00px;border-top:1px dotted #b0b0b0"></div>
<span class="t" style="left:21.00px;top:347.08px;font-size:8.8px;font-weight:400;color:#111;-webkit-text-stroke:.22px #111;">17</span>
<div style="position:absolute;left:10.50px;top:366.85px;width:6.50px;height:0.00px;border-top:1px dotted #b0b0b0"></div>
<span class="t" style="left:21.00px;top:360.26px;font-size:8.8px;font-weight:400;color:#111;-webkit-text-stroke:.22px #111;">18</span>
<div style="position:absolute;left:10.50px;top:380.03px;width:6.50px;height:0.00px;border-top:1px dotted #b0b0b0"></div>
<span class="t" style="left:21.00px;top:373.44px;font-size:8.8px;font-weight:400;color:#111;-webkit-text-stroke:.22px #111;">19</span>
<div style="position:absolute;left:10.50px;top:393.21px;width:6.50px;height:0.00px;border-top:1px dotted #b0b0b0"></div>
<span class="t" style="left:21.00px;top:386.61px;font-size:8.8px;font-weight:400;color:#111;-webkit-text-stroke:.22px #111;">20</span>
<div style="position:absolute;left:10.50px;top:406.39px;width:6.50px;height:0.00px;border-top:1px dotted #b0b0b0"></div>
<span class="t" style="left:21.00px;top:399.79px;font-size:8.8px;font-weight:400;color:#111;-webkit-text-stroke:.22px #111;">21</span>
<div style="position:absolute;left:10.50px;top:419.56px;width:6.50px;height:0.00px;border-top:1px dotted #b0b0b0"></div>
<span class="t" style="left:21.00px;top:412.97px;font-size:8.8px;font-weight:400;color:#111;-webkit-text-stroke:.22px #111;">22</span>
<div style="position:absolute;left:10.50px;top:432.74px;width:6.50px;height:0.00px;border-top:1px dotted #b0b0b0"></div>
<span class="t" style="left:21.00px;top:426.14px;font-size:8.8px;font-weight:400;color:#111;-webkit-text-stroke:.22px #111;">23</span>
<div style="position:absolute;left:10.50px;top:445.92px;width:6.50px;height:0.00px;border-top:1px dotted #b0b0b0"></div>
<span class="t" style="left:21.00px;top:439.32px;font-size:8.8px;font-weight:400;color:#111;-webkit-text-stroke:.22px #111;">24</span>
<div style="position:absolute;left:10.50px;top:459.09px;width:6.50px;height:0.00px;border-top:1px dotted #b0b0b0"></div>
<span class="t" style="left:21.00px;top:452.50px;font-size:8.8px;font-weight:400;color:#111;-webkit-text-stroke:.22px #111;">25</span>
<div style="position:absolute;left:10.50px;top:472.27px;width:6.50px;height:0.00px;border-top:1px dotted #b0b0b0"></div>
<span class="t" style="left:21.00px;top:465.67px;font-size:8.8px;font-weight:400;color:#111;-webkit-text-stroke:.22px #111;">26</span>
<div style="position:absolute;left:10.50px;top:485.45px;width:6.50px;height:0.00px;border-top:1px dotted #b0b0b0"></div>
<span class="t" style="left:21.00px;top:478.85px;font-size:8.8px;font-weight:400;color:#111;-webkit-text-stroke:.22px #111;">27</span>
<div style="position:absolute;left:10.50px;top:498.62px;width:6.50px;height:0.00px;border-top:1px dotted #b0b0b0"></div>
<span class="t" style="left:21.00px;top:492.03px;font-size:8.8px;font-weight:400;color:#111;-webkit-text-stroke:.22px #111;">28</span>
<div style="position:absolute;left:10.50px;top:511.80px;width:6.50px;height:0.00px;border-top:1px dotted #b0b0b0"></div>
<span class="t" style="left:21.00px;top:505.21px;font-size:8.8px;font-weight:400;color:#111;-webkit-text-stroke:.22px #111;">29</span>
<div style="position:absolute;left:182.20px;top:161.50px;width:12.80px;height:355.50px;background:#f3f3f3"></div>
<div style="position:absolute;left:185.50px;top:167.00px;width:0.00px;height:0.00px;border:2.500px solid transparent;border-bottom:3px solid #444;border-top:0"></div>
<div style="position:absolute;left:182.40px;top:175.30px;width:10.60px;height:11.30px;border:1px solid #a3a3a3;border-radius:2px;background:linear-gradient(90deg,#f2f2f2,#dedede);box-sizing:border-box"></div>
<div style="position:absolute;left:185.50px;top:509.00px;width:0.00px;height:0.00px;border:2.500px solid transparent;border-top:3px solid #444;border-bottom:0"></div>
<div style="position:absolute;left:196.00px;top:142.40px;width:804.00px;height:4.30px;background:linear-gradient(#eef2fb,#d3e2f4 45%,#adc9e9)"></div>
<svg style="left:205px;top:130px" width="112" height="17" viewBox="0 0 112 17"><defs><linearGradient id="tg" x1="0" y1="0" x2="0" y2="1"><stop offset="0" stop-color="#f4f9fe"/><stop offset=".45" stop-color="#dcecfb"/><stop offset="1" stop-color="#b9d6f5"/></linearGradient></defs><path d="M5 17 L17 2 Q18 .5 20 .500 L112 .500 L112 17Z" fill="url(#tg)"/><path d="M5 13 L17 2 Q18 .5 20 .500 L112 .500" fill="none" stroke="#a9c4e2" stroke-width=".8"/></svg>
<svg style="left:202px;top:132.200px" width="6" height="8" viewBox="0 0 6 8"><path d="M4.800 .8 L1 4 L4.800 7.200Z" fill="none" stroke="#333" stroke-width=".9"/></svg>
<span class="t" style="left:228.00px;top:130.80px;font-size:8.8px;font-weight:700;color:#15202e;letter-spacing:-0.452px;">10 - WINDOW_010</span>
<svg style="left:305px;top:134px" width="7" height="7" viewBox="0 0 7 7"><path d="M.8 .8 L6.200 6.200M6.200 .8 L.8 6.200" stroke="#1a2636" stroke-width="1.300"/></svg>
<svg style="left:986px;top:132px" width="6" height="8" viewBox="0 0 6 8"><path d="M1.200 .8 L5 4 L1.200 7.200Z" fill="none" stroke="#333" stroke-width=".9"/></svg>
<div style="position:absolute;left:196.00px;top:146.00px;width:804.00px;height:372.00px;background:#b9d3ee"></div>
<div style="position:absolute;left:196.00px;top:146.00px;width:2.60px;height:372.00px;background:#eef1f8"></div>
<div style="position:absolute;left:202.50px;top:146.60px;width:750.20px;height:367.00px;background:#000"></div>
<svg style="left:210px;top:154px" width="742.500" height="359.600"><defs><pattern id="dots" x="1.080" y=".780" width="14.640" height="14.640" patternUnits="userSpaceOnUse"><rect x="6.800" y="6.800" width="1" height="1" fill="#c2c2c2"/></pattern></defs><rect width="742.500" height="359.600" fill="url(#dots)"/></svg>
<svg style="left:0;top:0" width="1000" height="531"><g fill="none" stroke="#d0d0d0" stroke-width="1"><path d="M304 231.700V248.600M304 231.700H314M304 248.600H314" stroke="#9a9a9a"/><path d="M253 278V356H314M253 278H270M269 281.400H314M270.300 281.400V296.400H314"/></g><g fill="#000" stroke="#e8e8e8" stroke-width=".9"><circle cx="304" cy="231.700" r="2.300"/><circle cx="304" cy="248.600" r="2.300"/><circle cx="253" cy="277.800" r="2.300"/><circle cx="270.300" cy="277.800" r="2.300"/><circle cx="268.800" cy="280.800" r="2.300"/><circle cx="270.300" cy="296.400" r="2.300"/><circle cx="253" cy="356" r="2.300"/></g></svg>
<div style="position:absolute;left:952.70px;top:146.60px;width:30.70px;height:366.60px;background:#fff"></div>
<div style="position:absolute;left:983.40px;top:146.60px;width:11.00px;height:366.60px;background:#f0f0f0"></div>
<div style="position:absolute;left:986.30px;top:152.50px;width:0.00px;height:0.00px;border:2.500px solid transparent;border-bottom:3px solid #444;border-top:0"></div>
<div style="position:absolute;left:984.00px;top:160.00px;width:9.80px;height:226.00px;border:1px solid #9a9a9a;border-radius:2px;background:linear-gradient(90deg,#f6f6f6,#dadada);box-sizing:border-box"></div>
<div style="position:absolute;left:986.60px;top:271.00px;width:4.50px;height:1.00px;background:#777;box-shadow:0 2px 0 #777,0 4px 0 #777"></div>
<div style="position:absolute;left:986.30px;top:506.00px;width:0.00px;height:0.00px;border:2.500px solid transparent;border-top:3px solid #444;border-bottom:0"></div>
<div style="position:absolute;left:994.40px;top:146.00px;width:5.60px;height:372.00px;background:linear-gradient(90deg,#c2d8f0 0,#c9ddf2 38%,#eef1f9 45%,#f1f3fa 100%)"></div>
<div style="position:absolute;left:196.00px;top:513.60px;width:804.00px;height:4.40px;background:linear-gradient(#d9e6f5 0,#b9d3ee 22%,#b4cfec 80%,#c9d9ea 100%)"></div>
<div style="position:absolute;left:0.00px;top:517.80px;width:1000.00px;height:13.20px;background:#f0f0f0;border-top:1px solid #d6d6d6;box-sizing:border-box"></div>
<span class="t" style="left:4.80px;top:520.50px;font-size:8.8px;font-weight:400;color:#777;letter-spacing:-0.623px;">cMT-SVR (1024 x 748)</span>
<span class="t" style="left:697.00px;top:520.40px;font-size:8.8px;font-weight:400;color:#222;letter-spacing:-0.440px;">X = 402</span>
<span class="t" style="left:740.00px;top:520.40px;font-size:8.8px;font-weight:400;color:#222;letter-spacing:-0.428px;">Y = 0</span>
<div style="position:absolute;left:689.60px;top:519.50px;width:1.00px;height:11.50px;background:#d7d7d7"></div>
<div style="position:absolute;left:736.00px;top:519.50px;width:1.00px;height:11.50px;background:#d7d7d7"></div>
<div style="position:absolute;left:779.20px;top:519.50px;width:1.00px;height:11.50px;background:#d7d7d7"></div>
<div style="position:absolute;left:849.60px;top:519.50px;width:1.00px;height:11.50px;background:#d7d7d7"></div>
<div style="position:absolute;left:869.50px;top:519.50px;width:1.00px;height:11.50px;background:#d7d7d7"></div>
<div style="position:absolute;left:892.80px;top:519.50px;width:1.00px;height:11.50px;background:#d7d7d7"></div>
<div style="position:absolute;left:915.00px;top:519.50px;width:1.00px;height:11.50px;background:#d7d7d7"></div>
<span class="t" style="left:852.50px;top:520.40px;font-size:8.8px;font-weight:400;color:#8a8a8a;letter-spacing:-0.698px;">CAP</span>
<span class="t" style="left:872.50px;top:520.40px;font-size:8.8px;font-weight:400;color:#111;letter-spacing:-0.516px;-webkit-text-stroke:.22px #111;">NUM</span>
<span class="t" style="left:895.00px;top:520.40px;font-size:8.8px;font-weight:400;color:#8a8a8a;letter-spacing:-1.242px;">SCRL</span>
<div style="position:absolute;left:313.60px;top:0.00px;width:372.60px;height:527.80px;border-radius:0 0 5px 5px;box-shadow:1.200px 1px 3.500px 1.500px rgba(0,0,0,.78),1.500px 1px 8px 2px rgba(0,0,0,.3);"></div>
<div style="position:absolute;left:313.60px;top:0.00px;width:372.60px;height:527.80px;border-radius:0 0 5px 5px;background:#f1f1f3;border:1px solid #5e6066;border-top:0;box-sizing:border-box;"></div>
<div style="position:absolute;left:314.60px;top:0.00px;width:370.60px;height:17.00px;background:linear-gradient(#dcdde0 0,#eeeef0 22%,#f4f4f5 55%,#f3f3f4 100%);"></div>
<div style="position:absolute;left:562.00px;top:0.00px;width:120.00px;height:16.00px;background:linear-gradient(90deg,rgba(110,110,110,0) 0,rgba(100,100,100,.78) 16%,rgba(115,115,115,.6) 30%,rgba(85,85,85,.85) 55%,rgba(110,110,110,.6) 75%,rgba(150,150,150,.35) 100%);-webkit-mask-image:linear-gradient(#000 0,#000 35%,rgba(0,0,0,.55) 70%,rgba(0,0,0,.25) 100%);"></div>
<div style="position:absolute;left:583.00px;top:6.00px;width:34.00px;height:10.00px;background:radial-gradient(ellipse 50% 90% at 50% 100%,rgba(255,255,255,.8) 0,rgba(255,255,255,.4) 50%,rgba(255,255,255,0) 100%);"></div>
<div style="position:absolute;left:314.60px;top:147.00px;width:3.40px;height:362.00px;background:linear-gradient(90deg,#141414 0,#000 35%,#1c1c1c 58%,#8a8a8a 82%,#e8e8e8 100%);"></div>
<div style="position:absolute;left:314.60px;top:509.00px;width:3.40px;height:7.00px;background:linear-gradient(#0a0a0a,#555 35%,#c9d6e4 70%,#f4f4f6);"></div>
<div style="position:absolute;left:314.60px;top:141.00px;width:3.40px;height:6.00px;background:linear-gradient(#f1f1f3,#d9e2ee 45%,#8fa2b8 75%,#222);"></div>
<div style="position:absolute;left:682.20px;top:147.00px;width:3.00px;height:362.00px;background:linear-gradient(270deg,#141414 0,#000 35%,#1c1c1c 58%,#8a8a8a 82%,#e8e8e8 100%);"></div>
<div style="position:absolute;left:682.20px;top:509.00px;width:3.00px;height:7.00px;background:linear-gradient(#0a0a0a,#555 35%,#c9d6e4 70%,#f4f4f6);"></div>
<div style="position:absolute;left:682.20px;top:141.00px;width:3.00px;height:6.00px;background:linear-gradient(#f1f1f3,#d9e2ee 45%,#8fa2b8 75%,#222);"></div>
<div style="position:absolute;left:313.60px;top:147.00px;width:1.00px;height:364.00px;background:#2c2c2c"></div>
<div style="position:absolute;left:685.20px;top:147.00px;width:1.00px;height:364.00px;background:#2c2c2c"></div>
<div style="position:absolute;left:317.20px;top:15.60px;width:365.80px;height:509.10px;background:#fafafa;border-radius:1.500px"></div>
<div style="position:absolute;left:317.90px;top:16.30px;width:364.40px;height:507.70px;background:#b2b2b2;border-radius:1px"></div>
<div style="position:absolute;left:318.60px;top:17.00px;width:363.00px;height:506.30px;background:#f0f0f0;"></div>
<span class="t" style="left:319.60px;top:1.00px;font-size:9px;font-weight:400;color:#1a1a1a;letter-spacing:-0.191px;">New Barcode Scanner (Android Camera) Object</span>
<div style="position:absolute;left:647.20px;top:0.00px;width:34.80px;height:10.60px;box-sizing:border-box;border:1px solid #6f2a20;border-top:0;border-radius:0 0 3px 3px;background:linear-gradient(#e3a797,#d2705a 45%,#c0452c 50%,#cf6a4c);box-shadow:inset 0 0 0 1px rgba(255,255,255,.35)"></div>
<svg style="left:661px;top:.3px" width="8" height="7" viewBox="0 0 8 7"><path d="M1 .8 L7 6.200M7 .8 L1 6.200" stroke="#5a241b" stroke-width="2.600"/><path d="M1 .8 L7 6.200M7 .8 L1 6.200" stroke="#fff" stroke-width="1.500"/></svg>
<div style="position:absolute;left:323.60px;top:38.00px;width:351.40px;height:457.80px;background:#fff;border:1px solid #a0a1a6;box-sizing:border-box"></div>
<div style="position:absolute;left:362.00px;top:25.40px;width:35.20px;height:13.00px;box-sizing:border-box;border:1px solid #a0a1a6;border-bottom:0;background:linear-gradient(#f3f3f3,#ebebeb 50%,#dddddd 52%,#d3d3d3)"></div>
<div style="position:absolute;left:323.60px;top:23.60px;width:38.90px;height:15.40px;box-sizing:border-box;border:1px solid #a0a1a6;border-bottom:0;background:#fff"></div>
<span class="t" style="left:329.00px;top:25.73px;font-size:8.2px;font-weight:400;color:#111;letter-spacing:-0.234px;">General</span>
<span class="t" style="left:365.00px;top:26.73px;font-size:8.2px;font-weight:400;color:#111;letter-spacing:-0.135px;">Security</span>
<span class="t" style="left:360.00px;top:48.73px;font-size:8.2px;font-weight:400;color:#111;letter-spacing:-0.272px;">Comment :</span>
<div class="edit" style="position:absolute;left:401.40px;top:47.40px;width:244.60px;height:14.20px;"></div>
<div class="grp" style="position:absolute;left:330.00px;top:71.00px;width:338.00px;height:140.70px;"></div>
<div style="position:absolute;left:334.60px;top:68.00px;width:59.40px;height:6.00px;background:#fff"></div>
<span class="t" style="left:336.60px;top:65.93px;font-size:8.2px;font-weight:400;color:#111;letter-spacing:-0.160px;">Control address</span>
<span class="t" style="left:365.60px;top:84.13px;font-size:8.2px;font-weight:400;color:#111;letter-spacing:-0.497px;">PLC :</span>
<div class="combo" style="position:absolute;left:388.60px;top:82.60px;width:202.00px;height:14.40px;"></div>
<span class="t" style="left:391.00px;top:84.83px;font-size:8.2px;font-weight:400;color:#111;letter-spacing:-0.318px;">Local HMI</span>
<div class="btn" style="position:absolute;left:592.40px;top:82.90px;width:56.60px;height:14.10px;"></div>
<span class="t" style="left:601.60px;top:84.73px;font-size:8.2px;font-weight:400;color:#111;letter-spacing:0.034px;">Settings...</span>
<span class="t" style="left:350.60px;top:101.73px;font-size:8.2px;font-weight:400;color:#111;letter-spacing:-0.177px;">Address :</span>
<div class="combo" style="position:absolute;left:389.00px;top:100.40px;width:104.60px;height:15.00px;"></div>
<span class="t" style="left:391.00px;top:102.93px;font-size:8.2px;font-weight:400;color:#111;letter-spacing:-0.344px;">LW</span>
<div class="edit" style="position:absolute;left:496.00px;top:100.00px;width:66.40px;height:14.40px;"></div>
<span class="t" style="left:499.00px;top:102.83px;font-size:8.2px;font-weight:400;color:#111;">0</span>
<div style="position:absolute;left:564.00px;top:100.00px;width:25.00px;height:14.40px;box-sizing:border-box;border:1px solid;border-color:#a9a9a9 transparent transparent #b5b5b5;background:#fff"></div>
<div class="sunk" style="position:absolute;left:339.40px;top:124.40px;width:319.60px;height:82.00px;"></div>
<span class="t" style="left:393.00px;top:128.73px;font-size:8.2px;font-weight:400;color:#111;letter-spacing:-0.436px;">Command :</span>
<span class="t" style="left:435.00px;top:128.73px;font-size:8.2px;font-weight:400;color:#111;letter-spacing:-0.078px;">LW-0</span>
<span class="t" style="left:436.40px;top:144.13px;font-size:8.2px;font-weight:400;color:#111;letter-spacing:0.011px;">( 0 : none, 1 : start and clear, 2 : stop, 3 : clear )</span>
<span class="t" style="left:368.60px;top:158.73px;font-size:8.2px;font-weight:400;color:#111;letter-spacing:-0.101px;">Execution status :</span>
<span class="t" style="left:435.00px;top:158.73px;font-size:8.2px;font-weight:400;color:#111;letter-spacing:-0.078px;">LW-1</span>
<span class="t" style="left:436.40px;top:174.13px;font-size:8.2px;font-weight:400;color:#111;letter-spacing:-0.066px;">( 0 : none, 1 : success, 2 or more : error code )</span>
<span class="t" style="left:386.00px;top:189.93px;font-size:8.2px;font-weight:400;color:#111;letter-spacing:-0.080px;">Data length :</span>
<span class="t" style="left:435.00px;top:189.93px;font-size:8.2px;font-weight:400;color:#111;letter-spacing:-0.078px;">LW-2</span>
<div class="grp" style="position:absolute;left:330.00px;top:221.00px;width:338.00px;height:121.30px;"></div>
<div style="position:absolute;left:334.60px;top:218.00px;width:56.40px;height:6.00px;background:#fff"></div>
<span class="t" style="left:336.60px;top:215.93px;font-size:8.2px;font-weight:400;color:#111;letter-spacing:-0.159px;">Status address</span>
<span class="t" style="left:365.60px;top:233.73px;font-size:8.2px;font-weight:400;color:#111;letter-spacing:-0.497px;">PLC :</span>
<div class="combo" style="position:absolute;left:388.60px;top:232.00px;width:202.00px;height:14.60px;"></div>
<span class="t" style="left:391.00px;top:234.33px;font-size:8.2px;font-weight:400;color:#111;letter-spacing:-0.318px;">Local HMI</span>
<div class="btn" style="position:absolute;left:592.40px;top:232.30px;width:56.60px;height:14.30px;"></div>
<span class="t" style="left:601.60px;top:234.23px;font-size:8.2px;font-weight:400;color:#111;letter-spacing:0.034px;">Settings...</span>
<span class="t" style="left:350.60px;top:251.13px;font-size:8.2px;font-weight:400;color:#111;letter-spacing:-0.177px;">Address :</span>
<div class="combo" style="position:absolute;left:389.00px;top:249.40px;width:104.60px;height:15.00px;"></div>
<span class="t" style="left:391.00px;top:251.93px;font-size:8.2px;font-weight:400;color:#111;letter-spacing:-0.908px;">LB</span>
<div class="edit" style="position:absolute;left:496.00px;top:249.00px;width:66.40px;height:14.40px;"></div>
<span class="t" style="left:499.00px;top:251.83px;font-size:8.2px;font-weight:400;color:#111;">0</span>
<div style="position:absolute;left:564.00px;top:249.00px;width:25.00px;height:14.40px;box-sizing:border-box;border:1px solid;border-color:#a9a9a9 transparent transparent #b5b5b5;background:#fff"></div>
<div class="sunk" style="position:absolute;left:339.40px;top:273.00px;width:319.60px;height:62.60px;"></div>
<span class="t" style="left:375.00px;top:278.73px;font-size:8.2px;font-weight:400;color:#111;letter-spacing:-0.184px;">Camera Status :</span>
<span class="t" style="left:435.00px;top:278.73px;font-size:8.2px;font-weight:400;color:#111;letter-spacing:0.301px;">LB-0</span>
<span class="t" style="left:436.40px;top:292.73px;font-size:8.2px;font-weight:400;color:#111;letter-spacing:0.096px;">( 0 : off, 1 : on )</span>
<span class="t" style="left:373.60px;top:307.13px;font-size:8.2px;font-weight:400;color:#111;letter-spacing:-0.172px;">Running Status :</span>
<span class="t" style="left:435.00px;top:307.13px;font-size:8.2px;font-weight:400;color:#111;letter-spacing:0.301px;">LB-1</span>
<span class="t" style="left:436.40px;top:321.33px;font-size:8.2px;font-weight:400;color:#111;letter-spacing:-0.056px;">( 0 : stopped, 1 : scanning )</span>
<div class="grp" style="position:absolute;left:330.00px;top:351.00px;width:338.00px;height:67.70px;"></div>
<div style="position:absolute;left:334.60px;top:348.00px;width:62.40px;height:6.00px;background:#fff"></div>
<span class="t" style="left:336.60px;top:345.93px;font-size:8.2px;font-weight:400;color:#111;letter-spacing:-0.234px;">Barcode address</span>
<span class="t" style="left:365.60px;top:363.13px;font-size:8.2px;font-weight:400;color:#111;letter-spacing:-0.497px;">PLC :</span>
<div class="combo" style="position:absolute;left:388.60px;top:361.60px;width:202.00px;height:14.40px;"></div>
<span class="t" style="left:391.00px;top:363.83px;font-size:8.2px;font-weight:400;color:#111;letter-spacing:-0.318px;">Local HMI</span>
<div class="btn" style="position:absolute;left:592.40px;top:361.90px;width:56.60px;height:14.10px;"></div>
<span class="t" style="left:601.60px;top:363.73px;font-size:8.2px;font-weight:400;color:#111;letter-spacing:0.034px;">Settings...</span>
<span class="t" style="left:350.60px;top:380.33px;font-size:8.2px;font-weight:400;color:#111;letter-spacing:-0.177px;">Address :</span>
<div class="combo" style="position:absolute;left:389.00px;top:379.00px;width:104.60px;height:14.60px;"></div>
<span class="t" style="left:391.00px;top:381.33px;font-size:8.2px;font-weight:400;color:#111;letter-spacing:-0.344px;">LW</span>
<div class="edit" style="position:absolute;left:496.00px;top:378.60px;width:66.40px;height:14.00px;"></div>
<span class="t" style="left:499.00px;top:381.23px;font-size:8.2px;font-weight:400;color:#111;">0</span>
<div style="position:absolute;left:564.00px;top:378.60px;width:25.00px;height:14.00px;box-sizing:border-box;border:1px solid;border-color:#a9a9a9 transparent transparent #b5b5b5;background:#fff"></div>
<div style="position:absolute;left:591.60px;top:378.60px;width:57.40px;height:14.00px;box-sizing:border-box;border:1px solid;border-color:#a9a9a9 transparent transparent #b5b5b5;background:#fff"></div>
<span class="t" style="left:593.40px;top:380.33px;font-size:8.2px;font-weight:400;color:#111;letter-spacing:-0.149px;">10 word(s)</span>
<div class="chk" style="position:absolute;left:389.00px;top:400.10px;width:9.90px;height:9.90px;"></div>
<span class="t" style="left:401.00px;top:399.73px;font-size:8.2px;font-weight:400;color:#111;letter-spacing:-0.389px;">Use Unicode</span>
<div class="grp" style="position:absolute;left:330.00px;top:429.00px;width:338.00px;height:35.70px;"></div>
<div style="position:absolute;left:334.60px;top:426.00px;width:55.80px;height:6.00px;background:#fff"></div>
<span class="t" style="left:336.60px;top:423.93px;font-size:8.2px;font-weight:400;color:#111;letter-spacing:-0.157px;">Read byte limit</span>
<div class="chk" style="position:absolute;left:389.00px;top:444.00px;width:9.90px;height:9.90px;"></div>
<span class="t" style="left:401.00px;top:443.73px;font-size:8.2px;font-weight:400;color:#111;letter-spacing:-0.417px;">Enable</span>
<span class="t" style="left:335.00px;top:472.73px;font-size:8.2px;font-weight:400;color:#111;letter-spacing:-0.134px;">* Barcode Scanner (Android Camera) requires cMT Viewer version 1.7.0 or later.</span>
<div class="btn" style="position:absolute;left:444.40px;top:502.00px;width:53.20px;height:14.60px;border-color:#4a9bc9;box-shadow:inset 0 0 0 1px #7fdcf8,inset 0 0 0 2px rgba(255,255,255,.55)"></div>
<span class="t" style="left:465.00px;top:504.63px;font-size:8.2px;font-weight:400;color:#111;letter-spacing:-0.422px;">OK</span>
<div class="btn" style="position:absolute;left:503.60px;top:502.00px;width:53.40px;height:14.60px;"></div>
<span class="t" style="left:519.00px;top:504.63px;font-size:8.2px;font-weight:400;color:#111;letter-spacing:-0.128px;">Anuluj</span>
<div class="btn" style="position:absolute;left:622.40px;top:502.00px;width:53.20px;height:14.60px;"></div>
<span class="t" style="left:637.00px;top:504.63px;font-size:8.2px;font-weight:400;color:#111;letter-spacing:-0.497px;">Pomoc</span>
<div style="position:absolute;left:312.60px;top:527.80px;width:375.60px;height:4.00px;background:linear-gradient(90deg,#8c8c8c 0,#5a5a5a 9%,#454545 25%,#454545 80%,#5a5a5a 93%,#777 100%);border-radius:0 0 4px 4px"></div>
</div>
</body></html>
